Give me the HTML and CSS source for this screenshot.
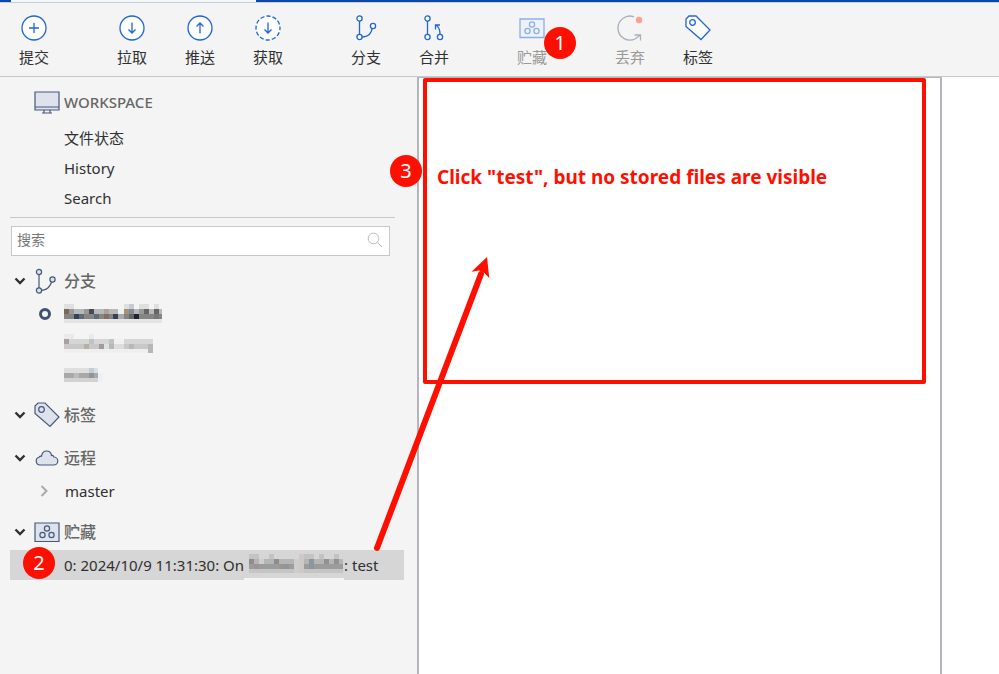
FILE: index.html
```
<!DOCTYPE html>
<html lang="zh-CN">
<head>
<meta charset="utf-8">
<title>Stash</title>
<link rel="stylesheet" href="styles.css">
</head>
<body>
<div class="tabstrip"><span class="tab"></span></div>
<header class="toolbar">
  <div class="group">
    <button class="tool"><svg viewBox="0 0 26 26"><circle cx="13" cy="13" r="12" fill="#fff"/><path d="M13 8v10M8 13h10"/></svg><span>提交</span></button>
  </div>
  <div class="group">
    <button class="tool"><svg viewBox="0 0 26 26"><circle cx="13" cy="13" r="12" fill="#fff"/><path d="M13 7.500v10.500M9.500 14.500l3.500 3.500 3.500-3.500"/></svg><span>拉取</span></button>
    <button class="tool"><svg viewBox="0 0 26 26"><circle cx="13" cy="13" r="12" fill="#fff"/><path d="M13 18.500V8M9.500 11.500L13 8l3.500 3.500"/></svg><span>推送</span></button>
    <button class="tool"><svg viewBox="0 0 26 26"><circle cx="13" cy="13" r="12" fill="#fff" stroke-dasharray="4.300 1.980" stroke-dashoffset="2"/><path d="M13 7.500v10.500M9.500 14.500l3.500 3.500 3.500-3.500"/></svg><span>获取</span></button>
  </div>
  <div class="group">
    <button class="tool"><svg viewBox="0 0 26 26"><path d="M6.500 6v13M9 22c7 0 10-5 10.500-11"/><circle cx="6.500" cy="3.500" r="2.600" fill="#fff"/><circle cx="6.500" cy="22" r="2.600" fill="#fff"/><circle cx="20" cy="11" r="2.600" fill="#fff"/></svg><span>分支</span></button>
    <button class="tool"><svg viewBox="0 0 26 26"><path d="M6.500 6v13M19 19c0-4-1-7-4-9M14.500 14.500V10h4.500"/><circle cx="6.500" cy="3.500" r="2.600" fill="#fff"/><circle cx="6.500" cy="22" r="2.600" fill="#fff"/><circle cx="19" cy="22" r="2.600" fill="#fff"/></svg><span>合并</span></button>
  </div>
  <div class="group">
    <button class="tool muted"><svg viewBox="0 0 26 26"><path d="M1 4h24v18.500H1z" fill="#edf1f8"/><circle cx="13" cy="9.500" r="2.600"/><circle cx="8.500" cy="16" r="2.600"/><circle cx="17.500" cy="16" r="2.600"/></svg><span>贮藏</span><b class="badge badge-stash">1</b></button>
  </div>
  <div class="group">
    <button class="tool muted discard"><svg viewBox="0 0 26 26"><path d="M17 1.800A12 12 0 1 0 18 24l5.500-4M17.500 20h6v5.500"/><circle class="dot" cx="22" cy="5" r="3.200"/></svg><span>丢弃</span></button>
    <button class="tool"><svg viewBox="0 0 26 26"><path d="M4 1h7l14 14-9 9.500L1 11.500V4z" fill="#fff"/><circle cx="7.500" cy="7.500" r="2.800"/></svg><span>标签</span></button>
  </div>
</header>
<div class="workspace">
  <aside class="sidebar">
    <h2 class="heading title"><span></span><svg class="icon" viewBox="0 0 26 26"><path d="M1 3h24v18H1z"/><path d="M1 18h24M10 21v2.500M16 21v2.500M8 24h10"/></svg><span>WORKSPACE</span></h2>
    <nav class="list nav">
      <a href="#status">文件状态</a>
      <a href="#history">History</a>
      <a href="#search">Search</a>
    </nav>
    <div class="search">
      <input type="search" placeholder="搜索" aria-label="搜索">
      <svg viewBox="0 0 16 16"><circle cx="6.500" cy="6.500" r="5.300"/><path d="M10.500 10.500L15 15"/></svg>
    </div>
    <section>
      <button class="heading" aria-expanded="true"><svg class="chevron" viewBox="0 0 12 12"><path d="M1.500 3.500L6 8l4.500-4.500"/></svg><svg class="icon" viewBox="0 0 26 26"><path d="M5 4v18M5 22.500c8 0 11-3 13.500-11" fill="none"/><circle cx="5" cy="4" r="2.600"/><circle cx="5" cy="22.500" r="2.600"/><circle cx="18.500" cy="11.500" r="2.600"/></svg><span>分支</span></button>
      <div class="list">
        <a class="current" href="#b1" aria-label="当前分支"><svg class="mosaic" width="100" height="20" viewBox="0 0 100 20" shape-rendering="crispEdges">
          <path d="M0 0h10v5H0zM60 0h5v5h-5zM75 0h10v5H75zM90 0h5v5h-5z" fill="#dfdfdf"/><path d="M0 15h98v4H0z" fill="#e4e4e4"/><path d="M65 0h5v5h-5z" fill="#c5cbd1"/>
          <path d="M0 5h98v5H0z" fill="#b8b8b8"/><path d="M0 10h98v5H0z" fill="#858585"/>
          <path d="M0 5h5v5H0z" fill="#7c675f"/><path d="M5 5h5v5H5zM20 5h5v5h-5zM75 5h5v5h-5z" fill="#999"/><path d="M25 5h5v5h-5z" fill="#494955"/><path d="M40 5h5v5h-5z" fill="#aca1a0"/><path d="M54 5h6v5h-6z" fill="#f0f0f0"/><path d="M60 5h5v5h-5z" fill="#a88f76"/><path d="M65 5h5v5h-5z" fill="#858b94"/><path d="M80 5h5v5h-5zM90 5h5v5h-5z" fill="#666"/>
          <path d="M10 10h5v5h-5z" fill="#34435c"/><path d="M15 10h5v5h-5zM30 10h5v5h-5z" fill="#626a73"/><path d="M40 10h5v5h-5z" fill="#80705f"/><path d="M49 10h5v5h-5z" fill="#34435c"/><path d="M54 10h6v5h-6z" fill="#aaa"/><path d="M65 10h5v5h-5z" fill="#666"/><path d="M70 10h5v5h-5z" fill="#20242e"/><path d="M90 10h5v5h-5z" fill="#777"/>
        </svg></a>
        <a href="#b2" aria-label="分支 2"><svg class="mosaic" width="100" height="20" viewBox="0 0 100 20" shape-rendering="crispEdges">
          <path d="M0 0h10v5H0zM25 0h5v5h-5z" fill="#eaeaea"/><path d="M0 5h89v5H0z" fill="#d6d6d6"/><path d="M0 10h89v5H0z" fill="#c8c8c8"/>
          <path d="M0 15h89v4H0z" fill="#efefef"/>
          <path d="M0 5h5v5H0z" fill="#aaa19e"/><path d="M25 5h5v5h-5zM45 5h5v5h-5z" fill="#bfc3c7"/><path d="M50 5h10v5H50z" fill="#f1f1f1"/><path d="M20 10h5v5h-5z" fill="#b9b0a5"/><path d="M35 10h5v5h-5z" fill="#a29b9b"/><path d="M40 10h5v5h-5z" fill="#e0e0e0"/><path d="M50 10h10v5H50z" fill="#ddd"/><path d="M45 10h5v5h-5zM65 10h5v5h-5zM84 10h5v9h-5z" fill="#b4b8bb"/>
        </svg></a>
        <a href="#b3" aria-label="分支 3"><svg class="mosaic" width="100" height="20" viewBox="0 0 100 20" shape-rendering="crispEdges">
          <path d="M0 4h34v5H0z" fill="#dedede"/><path d="M0 9h34v5H0z" fill="#a9a9a8"/><path d="M0 14h34v4H0z" fill="#d2d2d2"/><path d="M25 4h5v5h-5z" fill="#c4cdd3"/><path d="M10 9h5v5h-5z" fill="#bbb"/><path d="M25 9h5v5h-5z" fill="#8b969e"/><path d="M34 9h5v9h-5z" fill="#ebf2f7"/>
        </svg></a>
      </div>
    </section>
    <section>
      <button class="heading" aria-expanded="true"><svg class="chevron" viewBox="0 0 12 12"><path d="M1.500 3.500L6 8l4.500-4.500"/></svg><svg class="icon" viewBox="0 0 26 26"><path d="M4 1h7l14 14-9 9.500L1 11.500V4z"/><circle cx="7.500" cy="7.500" r="2.800"/></svg><span>标签</span></button>
    </section>
    <section>
      <button class="heading" aria-expanded="true"><svg class="chevron" viewBox="0 0 12 12"><path d="M1.500 3.500L6 8l4.500-4.500"/></svg><svg class="icon" viewBox="0 0 26 26"><path d="M6 20a4 4 0 0 1-1-7.800c.8-1 1.700-1.200 2.500-1C8 7.500 10 6 12.500 6c2.800 0 4.700 1.800 5 4.500 1-.2 2 .3 2.500 1.500a4 4 0 0 1-.5 8z"/></svg><span>远程</span></button>
      <div class="list">
        <a class="remote" href="#master"><svg class="chevron closed" viewBox="0 0 12 12"><path d="M3.500 1L8.500 6l-5 5"/></svg>master</a>
      </div>
    </section>
    <section>
      <button class="heading" aria-expanded="true"><svg class="chevron" viewBox="0 0 12 12"><path d="M1.500 3.500L6 8l4.500-4.500"/></svg><svg class="icon" viewBox="0 0 26 26"><path d="M1 4h24v18.500H1z"/><circle cx="13" cy="9.500" r="2.600"/><circle cx="8.500" cy="16" r="2.600"/><circle cx="17.500" cy="16" r="2.600"/></svg><span>贮藏</span></button>
      <div class="list">
        <a class="selected" href="#stash0"><b class="badge badge-item">2</b><span>0: 2024/10/9 11:31:30: On</span><svg class="mosaic" width="100" height="30" viewBox="0 0 100 30" shape-rendering="crispEdges">
          <path d="M0 28h100v2H0z" fill="#f4f4f4"/><path d="M5 4h10v5H5zM25 4h5v5h-5zM60 4h10v5H60zM75 4h5v5h-5zM90 4h5v5h-5z" fill="#c3c3c3"/><path d="M5 9h94v5H5z" fill="#b5b5b5"/><path d="M5 14h94v5H5z" fill="#9c9c9c"/><path d="M5 19h94v4H5z" fill="#c5c5c5"/><path d="M55 4h5v19h-5z" fill="#cfc9c5"/><path d="M5 9h5v5H5zM30 9h5v5h-5z" fill="#8f8c8b"/><path d="M15 9h5v5h-5zM50 9h5v14h-5z" fill="#cecece"/><path d="M10 14h5v5h-5zM35 14h5v5h-5z" fill="#a0948f"/><path d="M40 14h5v5h-5zM65 9h5v10h-5z" fill="#8d969d"/><path d="M80 9h5v5h-5zM90 9h5v5h-5z" fill="#929292"/>
        </svg><span>: test</span></a>
      </div>
    </section>
    <b class="badge badge-panel">3</b>
  </aside>
  <main class="content">
    <div class="callout">Click "test", but no stored files are visible</div>
  </main>
  <svg class="arrow" width="120" height="296" viewBox="0 0 120 296"><path d="M4 292L108 18" stroke="#ff0f00" stroke-width="6" stroke-linecap="round"/><path d="M114 1L98.500 15.700 106 14.500 111.500 17 116.300 22.300z" fill="#ff0f00"/></svg>
</div>
</body>
</html>
```
FILE: styles.css
```
*, *::before { box-sizing: border-box; }
body {
  margin: 0;
  min-height: 100vh;
  display: flex;
  flex-direction: column;
  background: #fff;
  color: #303030;
  font: 15px/30px "Noto Sans", "Noto Sans CJK SC", sans-serif;
}
button { border: 0; padding: 0; background: none; color: inherit; font: inherit; }
a { color: inherit; text-decoration: none; }
svg { fill: none; flex: none; }

.tabstrip { height: 3px; padding-left: 11px; background: #0c47a8; border-bottom: 1px solid #c3cfdf; }
.tab { display: block; width: 245px; height: 2px; background: #f4f6f8; }

.toolbar {
  display: flex;
  gap: 30px;
  height: 74px;
  padding-top: 12px;
  background: #f4f4f4;
  border-bottom: 1px solid #c8c8c8;
}
.group { display: flex; align-items: flex-start; }
.tool {
  position: relative;
  width: 68px;
  display: flex;
  flex-direction: column;
  align-items: center;
  gap: 5px;
  line-height: 22px;
}
.tool svg { width: 26px; height: 26px; stroke: #1f66d6; stroke-width: 1.3; }
.tool.muted { color: #999; }
.muted svg { stroke: #8cb0e6; }
.discard svg { stroke: #a9b1bd; }
.dot { fill: #ff9f8c; stroke: none; }

.badge {
  position: absolute;
  width: 32px;
  height: 32px;
  border-radius: 50%;
  background: #ff0f00;
  color: #fff;
  font-size: 20px;
  font-weight: 400;
  line-height: 32px;
  text-align: center;
}
.badge-stash { left: 46px; top: 12px; }
.badge-item { left: 13px; top: -3px; }
.badge-panel { right: -5px; top: 78px; z-index: 1; }

.workspace {
  position: relative;
  flex: 1;
  display: grid;
  grid-template-columns: 417fr 525fr 57fr;
}
.sidebar { position: relative; padding: 8px 13px 0 10px; background: #f4f4f4; }
.heading {
  display: grid;
  grid-template-columns: 20px 26px auto;
  column-gap: 4px;
  align-items: center;
  justify-content: start;
  width: 100%;
  height: 34px;
  margin: 0;
  color: #666;
  font-size: 16px;
  font-weight: 500;
  line-height: 30px;
  text-align: left;
}
.heading.title { font-size: 15px; }
.heading .chevron { margin-left: 4px; }
.icon { width: 26px; height: 26px; fill: #dde2ec; stroke: #465878; stroke-width: 1.2; }
.chevron { width: 12px; height: 12px; stroke: #303030; stroke-width: 2.400; }
.closed { stroke: #aaa; stroke-width: 2; }
.list { display: flex; flex-direction: column; }
.list a { position: relative; display: flex; align-items: center; height: 30px; padding-left: 54px; }
.nav { margin: 4px 9px 8px 0; padding-bottom: 4px; border-bottom: 1px solid #c8c8c8; }
.list .remote { padding-left: 28px; gap: 15px; }
.list .current { padding-left: 29px; gap: 13px; }
.current::before { content: ""; width: 12px; height: 12px; border: 3px solid #3f5272; border-radius: 50%; }
.list .selected { background: #d6d6d6; white-space: nowrap; }

.search { position: relative; margin: 0 14px 8px 1px; }
.search input {
  display: block;
  width: 100%;
  height: 30px;
  padding: 0 30px 2px 5px;
  border: 1px solid #c8c8c8;
  border-radius: 0;
  background: #fff;
  font: inherit;
  font-size: 14px;
}
.search input::placeholder { color: #777; }
.search svg { position: absolute; right: 7px; top: 6px; width: 16px; height: 16px; stroke: #bbb; }
section .list { margin-top: 1px; }
section + section { margin-top: 9px; }

.content { border: 2px solid #b3b6ba; border-top-width: 1px; border-bottom: 0; padding: 0 14px 0 4px; }
.callout {
  height: 306px;
  padding: 80px 10px;
  border: 4px solid #ff0f00;
  border-radius: 2px;
  color: #ff0f00;
  font-size: 19px;
  font-weight: 700;
  line-height: 30px;
}
.arrow { position: absolute; left: 373px; top: 179px; }
```
